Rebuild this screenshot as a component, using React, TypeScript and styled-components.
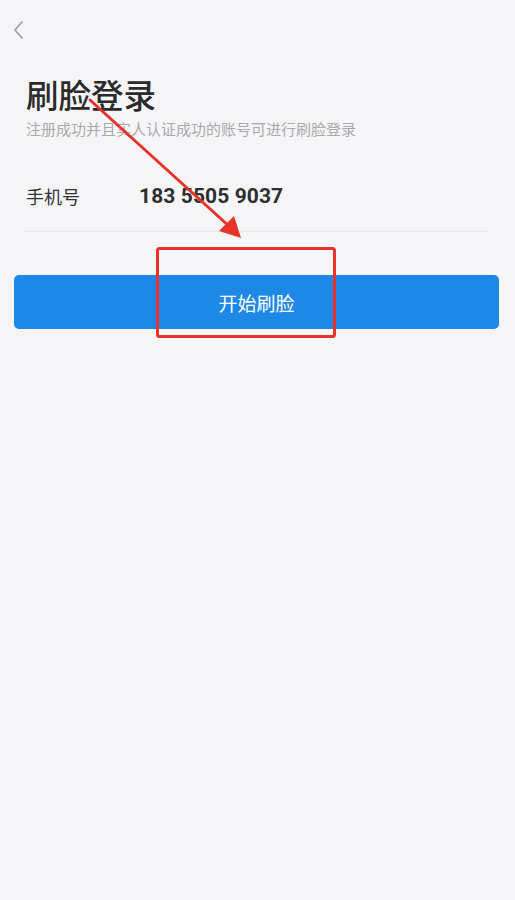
import styled, { createGlobalStyle } from 'styled-components'

const GlobalStyle = createGlobalStyle`
  html, body {
    margin: 0;
    padding: 0;
    background: #f5f5f7;
  }
  body {
    font-family: "Noto Sans CJK SC", "Noto Sans", sans-serif;
  }
`

const Page = styled.div`
  position: relative;
  width: 515px;
  height: 900px;
  box-sizing: border-box;
  padding-top: 18px;
  background: #f5f5f7;
  overflow: hidden;
`

const BackButton = styled.button`
  display: flex;
  align-items: center;
  height: 24px;
  margin-left: 10px;
  padding: 0;
  border: none;
  background: none;
  cursor: pointer;
`

const Header = styled.div`
  display: flex;
  flex-direction: column;
  padding: 0 26px;
  margin-top: 32px;
`

const Title = styled.h1`
  margin: 0;
  font-size: 32.5px;
  line-height: 40px;
  font-weight: 500;
  color: #2b2b2b;
`

const Subtitle = styled.p`
  margin: 5px 0 0;
  font-size: 15px;
  line-height: 20px;
  color: #a9a9ab;
`

const FieldRow = styled.div`
  display: flex;
  align-items: center;
  height: 70px;
  margin: 22px 27px 0 24px;
  padding-left: 2px;
  border-bottom: 1px solid #e9e9eb;
`

const FieldLabel = styled.span`
  width: 113px;
  font-size: 18px;
  color: #333;
`

const FieldValue = styled.span`
  font-family: Roboto, "Liberation Sans", sans-serif;
  font-size: 21px;
  font-weight: 700;
  color: #2e2e2e;
  letter-spacing: 0.1px;
`

const PrimaryButton = styled.button`
  display: flex;
  align-items: center;
  justify-content: center;
  width: 485px;
  height: 54px;
  margin: 43px 0 0 14px;
  border: none;
  border-radius: 5px;
  background: #1e88e6;
  color: #fff;
  font-family: "Noto Sans CJK SC", sans-serif;
  font-size: 19px;
  cursor: pointer;
`

const Annotation = styled.svg`
  position: absolute;
  left: 0;
  top: 0;
  pointer-events: none;
`

export default function App() {
  return (
    <>
      <GlobalStyle />
      <Page>
        <BackButton aria-label="返回">
          <svg width="16" height="22" viewBox="0 0 16 22">
            <path d="M12 3 L5 11 L12 19" fill="none" stroke="#9a9a9c" strokeWidth="1.6" strokeLinecap="round" strokeLinejoin="round" />
          </svg>
        </BackButton>

        <Header>
          <Title>刷脸登录</Title>
          <Subtitle>注册成功并且实人认证成功的账号可进行刷脸登录</Subtitle>
        </Header>

        <FieldRow>
          <FieldLabel>手机号</FieldLabel>
          <FieldValue>183 5505 9037</FieldValue>
        </FieldRow>

        <PrimaryButton>开始刷脸</PrimaryButton>

        <Annotation width="515" height="900" viewBox="0 0 515 900">
          <line x1="90" y1="100" x2="230" y2="227" stroke="#e8332b" strokeWidth="3" strokeLinecap="round" />
          <polygon points="241,238 219,231 234,216" fill="#e8332b" />
          <rect x="157.5" y="248.5" width="177" height="88" rx="2" fill="none" stroke="#e8332b" strokeWidth="3" />
        </Annotation>
      </Page>
    </>
  )
}
